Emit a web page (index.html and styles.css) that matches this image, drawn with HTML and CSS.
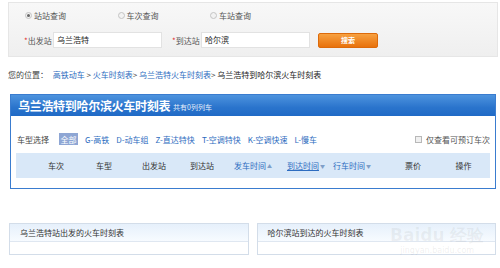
FILE: index.html
```html
<!DOCTYPE html>
<html lang="zh">
<head>
<meta charset="utf-8">
<title>乌兰浩特到哈尔滨火车时刻表</title>
<link rel="stylesheet" href="styles.css">
</head>
<body>
<div class="page">
  <div class="search">
    <div class="radios">
      <span class="radio-item"><span class="radio on"></span>站站查询</span>
      <span class="radio-item"><span class="radio"></span>车次查询</span>
      <span class="radio-item"><span class="radio"></span>车站查询</span>
    </div>
    <div class="fields">
      <span class="label"><span class="star">*</span>出发站</span>
      <span class="input">乌兰浩特</span>
      <span class="label label2"><span class="star">*</span>到达站</span>
      <span class="input">哈尔滨</span>
      <span class="btn">搜索</span>
    </div>
  </div>

  <div class="crumb">
    <span class="muted">您的位置：</span>
    <a class="link">高铁动车</a> &gt; <a class="link">火车时刻表</a>&gt; <a class="link">乌兰浩特火车时刻表</a>&gt; <span class="current">乌兰浩特到哈尔滨火车时刻表</span>
  </div>

  <div class="box">
    <div class="box-head">
      <span class="title">乌兰浩特到哈尔滨火车时刻表</span>
      <span class="count">共有0列列车</span>
    </div>
    <div class="box-body">
      <div class="filter">
        <span class="filter-label">车型选择</span>
        <span class="chip">全部</span>
        <a class="type">G-高铁</a>
        <a class="type">D-动车组</a>
        <a class="type">Z-直达特快</a>
        <a class="type">T-空调特快</a>
        <a class="type">K-空调快速</a>
        <a class="type">L-慢车</a>
        <span class="only"><span class="check"></span>仅查看可预订车次</span>
      </div>
      <div class="thead">
        <span></span>
        <span class="th">车次</span>
        <span class="th">车型</span>
        <span class="th">出发站</span>
        <span class="th">到达站</span>
        <span class="th sort">发车时间<i class="arr">▲</i></span>
        <span class="th sort under"><u>到达时间</u><i class="arr">▼</i></span>
        <span class="th sort">行车时间<i class="arr">▼</i></span>
        <span></span>
        <span class="th">票价</span>
        <span class="th">操作</span>
      </div>
    </div>
  </div>

  <div class="bottom">
    <div class="panel">
      <div class="panel-head">乌兰浩特站出发的火车时刻表</div>
    </div>
    <div class="panel">
      <div class="panel-head">哈尔滨站到达的火车时刻表</div>
    </div>
  </div>

  <div class="watermark">
    <div class="wm-big">Baidu 经验</div>
    <div class="wm-small">jingyan.baidu.com</div>
  </div>
</div>
</body>
</html>
```

FILE: styles.css
```css
* { box-sizing: border-box; }
html, body { margin: 0; padding: 0; background: #fff; }
body {
  font-family: "Noto Sans CJK SC", "Noto Sans", sans-serif;
  font-size: 8px;
  color: #333;
  width: 500px;
  height: 268px;
  overflow: hidden;
}
.page { position: relative; width: 500px; height: 268px; }

/* search panel */
.search {
  margin: 2px 2px 0 8px;
  height: 55px;
  border: 1px solid #e6e6e6;
  background: linear-gradient(#f8f8f8, #efefef);
  padding: 7px 0 0 16px;
}
.radios { display: flex; align-items: center; height: 10px; color: #555; }
.radio-item { display: flex; align-items: center; width: 92.5px; }
.radio {
  width: 7px; height: 7px; border-radius: 50%;
  border: 1px solid #c4c4c4; background: #f2f2f2;
  margin-right: 2px; position: relative;
}
.radio.on::after {
  content: ""; position: absolute; left: 1px; top: 1px;
  width: 3px; height: 3px; border-radius: 50%; background: #666;
}
.fields { display: flex; align-items: center; height: 16px; margin-top: 12px; margin-left: -1px; }
.label { width: 29px; color: #555; white-space: nowrap; }
.label2 { margin-left: 10px; }
.star { color: #e03030; }
.input {
  width: 109px; height: 16px; background: #fff;
  border: 1px solid #e2e2e2; padding-left: 3px;
  line-height: 14px; color: #222;
}
.btn {
  margin-left: 8px; width: 60px; height: 15px;
  border-radius: 2px;
  background: linear-gradient(#f7a040, #e8720c);
  border: 1px solid #dd6a0a;
  color: #fff; font-weight: bold;
  display: flex; align-items: center; justify-content: center;
  font-size: 7px;
}

/* breadcrumb */
.crumb { margin-top: 12px; padding-left: 8px; height: 12px; line-height: 12px; color: #444; white-space: nowrap; }
.link { color: #2d6cc0; }
.current { color: #222; }
.muted { color: #444; margin-right: 3px; }

/* main box */
.box {
  margin: 13px 0 0 10px;
  width: 486px;
  border: 1px solid #3a7ccf;
}
.box-head {
  height: 21px;
  background: linear-gradient(#4d93de, #2a74cc 60%, #206ac6);
  display: flex; align-items: center;
  padding-left: 7px;
}
.title { color: #fff; font-size: 12px; font-weight: bold; letter-spacing: -0.3px; }
.count { color: #e6f0fb; font-size: 7px; margin-left: 3px; margin-top: 2px; }
.box-body { padding: 17px 5px 10px 5px; }
.filter { display: flex; align-items: center; height: 12px; padding-left: 1px; white-space: nowrap; }
.filter-label { color: #444; flex: 0 0 30px; }
.chip {
  margin-left: 10px; flex: 0 0 19px; height: 12px;
  background: #8ea6d4; color: #fff;
  display: flex; align-items: center; justify-content: center;
}
.type { color: #2d6cc0; margin-left: 7px; }
.only { margin-left: auto; display: flex; align-items: center; color: #555; }
.check {
  width: 7px; height: 7px; border: 1px solid #b8b8b8;
  background: #f0f0f0; margin-right: 4px;
}
.thead {
  margin-top: 8px;
  height: 25px;
  background: #d9e8f8;
  display: grid;
  grid-template-columns: 16px 48px 48px 52px 44px 58px 48px 44px 15px 48px 53px;
  align-items: center;
  width: 474px;
}
.th { text-align: center; color: #333; white-space: nowrap; }
.sort { color: #2d6cc0; }
.under u { text-decoration: underline; }
.arr { font-style: normal; font-size: 5px; color: #7f9fc8; margin-left: 1px; vertical-align: 1px; }

/* bottom panels */
.bottom {
  margin: 34px 0 0 9px;
  display: flex; gap: 8px;
  width: 487px;
}
.panel {
  flex: 1;
  height: 32px;
  border: 1px solid #d3dde9;
}
.panel-head {
  height: 18px;
  background: linear-gradient(#e6f0fb, #f7fbff);
  border-bottom: 1px solid #dfe7f1;
  display: flex; align-items: center;
  padding-left: 10px;
  color: #333;
}

/* watermark */
.watermark {
  position: absolute; left: 390px; top: 222px;
  text-align: center; pointer-events: none;
}
.wm-big { font-family: "DejaVu Sans", sans-serif; font-size: 17px; font-weight: bold; color: rgba(120,120,120,0.09); line-height: 22px; }
.wm-small { font-family: "DejaVu Sans", sans-serif; font-size: 8px; color: rgba(120,120,120,0.12); line-height: 10px; }
```
